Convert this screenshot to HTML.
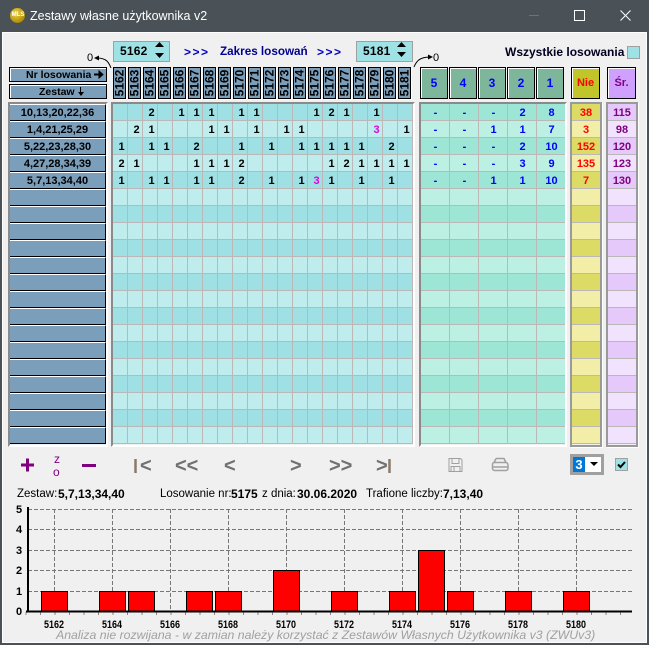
<!DOCTYPE html>
<html><head><meta charset="utf-8"><style>
html,body{margin:0;padding:0}
body{width:649px;height:645px;overflow:hidden;position:relative;background:#4b5257;font-family:"Liberation Sans",sans-serif;color:#000}
div,span,svg{position:absolute}
#c{left:2px;top:32px;width:645px;height:611px;background:#f0f0f0;box-shadow:inset 0 0 0 1px #fff}
.t{white-space:nowrap;line-height:14px}
.s{background:#9fe2e6;border:1px solid #a0a0a0;box-sizing:border-box;top:41px;width:57px;height:21px;font:bold 12px/19px "Liberation Sans",sans-serif;letter-spacing:.2px}
.h{display:flex;left:113px;top:67px;gap:2px}
.h span{position:relative;display:block;width:13px;height:32px;box-sizing:border-box;border:1px solid #000;background:#7b9ebb;box-shadow:1px 1px 0 #fff}
.h span em{position:absolute;left:-10px;top:9px;width:31px;height:12px;font:bold 12px/12px "Liberation Sans",sans-serif;font-style:normal;text-align:center;transform:rotate(-90deg)}
.tile{top:67px;height:32px;box-sizing:border-box;border:1px solid #000;box-shadow:inset 1px 1px 0 #fff;text-align:center;font:bold 12px/30px "Liberation Sans",sans-serif;color:#0000ff;background:#7db69b}
.btn{left:9px;width:98px;box-sizing:border-box;border:1px solid #000;background:#7b9ebb;box-shadow:inset 1px 1px 0 #fff}
.box{box-sizing:border-box;top:102px;height:345px;border-top:2px solid #8a8a8a;border-left:2px solid #8a8a8a;border-right:2px solid #fff;border-bottom:2px solid #fff}
.box2{box-sizing:border-box;top:102px;height:345px;border:2px solid #9a9a9a;box-shadow:1px 1px 0 #fff}
.g{top:104px;height:340px;font:bold 11px/19px "Liberation Sans",sans-serif}
.g p{margin:0;display:flex;height:17px}
.g i{display:block;font-style:normal;text-align:center;flex:none}
#m{left:113px;width:300px;background:repeating-linear-gradient(90deg,transparent 0 14px,#bdb8b8 14px 15px),repeating-linear-gradient(180deg,#9fe0e5 0 16px,#bdb8b8 16px 17px,#bfecec 17px 33px,#bdb8b8 33px 34px)}
#m i{width:15px;position:relative;left:1px}
#a{left:421px;width:144px;color:#0000ff;background:repeating-linear-gradient(90deg,transparent 0 28px,#bdb8b8 28px 29px),repeating-linear-gradient(180deg,#9de5d4 0 16px,#bdb8b8 16px 17px,#bcf0e3 17px 33px,#bdb8b8 33px 34px)}
#a i{width:29px}
#n{left:572px;width:28px;color:#ff0000;text-align:center;line-height:17px;padding-top:0;background:repeating-linear-gradient(180deg,#dbdb66 0 16px,#bdb8b8 16px 17px,#f2eea8 17px 33px,#bdb8b8 33px 34px)}
#r{left:608px;width:28px;color:#800080;text-align:center;line-height:17px;background:repeating-linear-gradient(180deg,#e4c9fa 0 16px,#bdb8b8 16px 17px,#f1e3fe 17px 33px,#bdb8b8 33px 34px)}
#l{left:10px;top:104px;width:96px}
#l p{margin:0;height:15px;border-top:1px solid #fff;border-bottom:1px solid #000;border-right:1px solid #000;box-sizing:content-box;background:#7b9ebb;font:bold 11px/17px "Liberation Sans",sans-serif;text-align:center}
.nav{top:456px;font:bold 20px/20px "Liberation Sans",sans-serif;color:#707070;white-space:nowrap}
</style></head><body>
<div id="c"></div>
<div style="left:10px;top:8px;width:15px;height:15px;border-radius:50%;background:radial-gradient(circle at 40% 35%,#f2d64a,#a98a05 75%)"></div>
<div class="t" style="left:11px;top:9px;width:14px;text-align:center;font:bold 6px/13px 'Liberation Sans',sans-serif;color:#fff">MLS</div>
<div class="t" style="left:30px;top:9px;font-size:12.5px;color:#fff">Zestawy własne użytkownika v2</div>
<svg style="left:0;top:0" width="649" height="32"><path d="M529 15.500h10" stroke="#6d7478"/><rect x="574.500" y="10.500" width="10" height="10" fill="none" stroke="#fff"/><path d="M620.500 10.500l10 10M630.500 10.500l-10 10" stroke="#fff" fill="none"/></svg>

<div class="s" style="left:113px;padding-left:6px">5162</div>
<div class="s" style="left:356px;padding-left:6px">5181</div>
<svg style="left:0;top:0" width="649" height="110">
<path d="M155 47h9l-4.500-5zM155 53h9l-4.500 5zM397 47h9l-4.500-5zM397 52h9l-4.500 5z" fill="#000"/>
<path d="M111 68c-2-5-4-10-14-10" fill="none" stroke="#000"/><path d="M94 58l5-2.500v5z" fill="#000"/>
<path d="M414 67c2-5 5-10 16-10" fill="none" stroke="#000"/><path d="M433 57l-5-2.500v5z" fill="#000"/>
</svg>
<div class="t" style="left:87px;top:51px;font-size:11px">0</div>
<div class="t" style="left:433px;top:51px;font-size:11px">0</div>
<div class="t" style="left:184px;top:45px;font:bold 12px/14px 'Liberation Sans',sans-serif;color:#0000c0;letter-spacing:1.500px">&gt;&gt;&gt;</div>
<div class="t" style="left:220px;top:45px;font:bold 11.7px/14px 'Liberation Sans',sans-serif;color:#000090">Zakres losowań</div>
<div class="t" style="left:317px;top:45px;font:bold 12px/14px 'Liberation Sans',sans-serif;color:#0000c0;letter-spacing:1.500px">&gt;&gt;&gt;</div>
<div class="t" style="left:505px;top:45px;font:bold 12px/14px 'Liberation Sans',sans-serif;color:#000020">Wszystkie losowania</div>
<div style="left:627px;top:46px;width:13px;height:13px;box-sizing:border-box;background:#9fe2e6;border:1px solid #a0a0a0"></div>

<div class="btn" style="top:67px;height:15px"></div>
<div class="btn" style="top:84px;height:15px"></div>
<div class="t" style="left:26px;top:68px;font:bold 10.5px/14px 'Liberation Sans',sans-serif">Nr losowania</div>
<div class="t" style="left:39px;top:85px;font:bold 10.5px/14px 'Liberation Sans',sans-serif">Zestaw</div>
<svg style="left:0;top:60px" width="110" height="40"><path d="M94 14.500h6" stroke="#000" stroke-width="2" fill="none"/><path d="M99 11l4 3.500-4 3.500zM80.500 27v6" fill="#000" stroke="#000"/><path d="M78 32h6l-3 4z" fill="#000"/></svg>

<div class="h"><span><em>5162</em></span><span><em>5163</em></span><span><em>5164</em></span><span><em>5165</em></span><span><em>5166</em></span><span><em>5167</em></span><span><em>5168</em></span><span><em>5169</em></span><span><em>5170</em></span><span><em>5171</em></span><span><em>5172</em></span><span><em>5173</em></span><span><em>5174</em></span><span><em>5175</em></span><span><em>5176</em></span><span><em>5177</em></span><span><em>5178</em></span><span><em>5179</em></span><span><em>5180</em></span><span><em>5181</em></span></div>

<div class="tile" style="left:420px;width:28px">5</div>
<div class="tile" style="left:449px;width:28px">4</div>
<div class="tile" style="left:478px;width:28px">3</div>
<div class="tile" style="left:507px;width:28px">2</div>
<div class="tile" style="left:536px;width:28px">1</div>
<div class="tile" style="left:571px;width:29px;background:#c0c52a;color:#ff0000;font-size:11px">Nie</div>
<div class="tile" style="left:607px;width:29px;background:#d0a0ff;color:#800080;font-size:11px">Śr.</div>

<div class="box" style="left:8px;width:100px"></div>
<div class="box" style="left:111px;width:304px"></div>
<div class="box" style="left:419px;width:148px"></div>
<div class="box2" style="left:570px;width:32px"></div>
<div class="box2" style="left:606px;width:32px"></div>

<div id="l">
<p>10,13,20,22,36</p><p>1,4,21,25,29</p><p>5,22,23,28,30</p><p>4,27,28,34,39</p><p>5,7,13,34,40</p><p></p><p></p><p></p><p></p><p></p><p></p><p></p><p></p><p></p><p></p><p></p><p></p><p></p><p></p><p></p>
</div>

<div class="g" id="m">
<p><i></i><i></i><i>2</i><i></i><i>1</i><i>1</i><i>1</i><i></i><i>1</i><i>1</i><i></i><i></i><i></i><i>1</i><i>2</i><i>1</i><i></i><i>1</i><i></i><i></i></p>
<p><i></i><i>2</i><i>1</i><i></i><i></i><i></i><i>1</i><i>1</i><i></i><i>1</i><i></i><i>1</i><i>1</i><i></i><i></i><i></i><i></i><i style="color:#e000e0">3</i><i></i><i>1</i></p>
<p><i>1</i><i></i><i>1</i><i>1</i><i></i><i>2</i><i></i><i></i><i>1</i><i></i><i>1</i><i></i><i>1</i><i>1</i><i>1</i><i>1</i><i>1</i><i></i><i>2</i><i></i></p>
<p><i>2</i><i>1</i><i></i><i></i><i></i><i>1</i><i>1</i><i>1</i><i>2</i><i></i><i></i><i></i><i></i><i></i><i>1</i><i>2</i><i>1</i><i>1</i><i>1</i><i>1</i></p>
<p><i>1</i><i></i><i>1</i><i>1</i><i></i><i>1</i><i>1</i><i></i><i>2</i><i></i><i>1</i><i></i><i>1</i><i style="color:#e000e0">3</i><i>1</i><i></i><i>1</i><i></i><i>1</i><i></i></p>
</div>

<div class="g" id="a">
<p><i>-</i><i>-</i><i>-</i><i>2</i><i>8</i></p>
<p><i>-</i><i>-</i><i>1</i><i>1</i><i>7</i></p>
<p><i>-</i><i>-</i><i>-</i><i>2</i><i>10</i></p>
<p><i>-</i><i>-</i><i>-</i><i>3</i><i>9</i></p>
<p><i>-</i><i>-</i><i>1</i><i>1</i><i>10</i></p>
</div>
<div class="g" id="n"><span style="position:static;display:block;padding-top:1px">38<br>3<br>152<br>135<br>7</span></div>
<div class="g" id="r"><span style="position:static;display:block;padding-top:1px">115<br>98<br>120<br>123<br>130</span></div>

<svg style="left:0;top:450px" width="649" height="30">
<path d="M21 15h13M27.500 8.500v13" stroke="#800080" stroke-width="3" fill="none"/>
<path d="M82 15.500h14" stroke="#800080" stroke-width="3" fill="none"/>
<path d="M135.500 9v14" stroke="#8a7a6a" stroke-width="2.500" fill="none"/>
<path d="M389.500 9v14" stroke="#8a7a6a" stroke-width="2.500" fill="none"/>
<path d="M449 8.500h11.500l1.500 1.500v11.500h-13zM452 8.500v5h7v-5M451 21.500v-5h9v5M454 17v4" fill="none" stroke="#a0a0a0" stroke-width="1"/>
<path d="M496 8.500h8l2 4M496 8.500l-2 4M492.500 14.500c0-2 1-2 3-2h10c2 0 2.500 1 2.500 3v3c0 1-1 2-2 2h-11.500c-1 0-2-1-2-2zM493 17h15M496 20.500h9" fill="none" stroke="#a0a0a0" stroke-width="1.500"/>
</svg>
<div class="t" style="left:54px;top:452px;font-size:12px;color:#800080">z</div>
<div class="t" style="left:53px;top:465px;font-size:12px;color:#800080">o</div>
<div class="nav" style="left:140px">&lt;</div>
<div class="nav" style="left:175px">&lt;&lt;</div>
<div class="nav" style="left:224px">&lt;</div>
<div class="nav" style="left:290px">&gt;</div>
<div class="nav" style="left:329px">&gt;&gt;</div>
<div class="nav" style="left:376px">&gt;</div>

<div style="left:570px;top:454px;width:34px;height:21px;box-sizing:border-box;border:3px solid #a0a0a0;background:#fff"></div>
<div style="left:573px;top:457px;width:12px;height:15px;background:#0078d7;color:#fff;font:bold 13px/15px 'Liberation Sans',sans-serif;text-align:center">3</div>
<svg style="left:590px;top:462px" width="10" height="6"><path d="M0 0h8l-4 4z" fill="#000"/></svg>
<div style="left:615px;top:458px;width:13px;height:13px;box-sizing:border-box;background:#9fe2e6;border:1px solid #a0a0a0"></div>
<svg style="left:615px;top:458px" width="13" height="13"><path d="M3 6.500l2.500 2.500 4.500-5" fill="none" stroke="#000" stroke-width="2"/></svg>

<div class="t" style="left:17px;top:487px;font-size:11.5px">Zestaw:</div>
<div class="t" style="left:58px;top:487px;font:bold 12px/14px 'Liberation Sans',sans-serif">5,7,13,34,40</div>
<div class="t" style="left:160px;top:487px;font-size:11.5px">Losowanie nr:</div>
<div class="t" style="left:231px;top:487px;font:bold 12px/14px 'Liberation Sans',sans-serif">5175</div>
<div class="t" style="left:262px;top:487px;font-size:11.5px">z dnia:</div>
<div class="t" style="left:297px;top:487px;font:bold 12px/14px 'Liberation Sans',sans-serif">30.06.2020</div>
<div class="t" style="left:366px;top:487px;font-size:11.5px">Trafione liczby:</div>
<div class="t" style="left:443px;top:487px;font:bold 12px/14px 'Liberation Sans',sans-serif">7,13,40</div>

<svg style="left:0;top:500px" width="649" height="145">
<g fill="none" stroke="#777" stroke-dasharray="4 2">
<path d="M28 9.500H632M28 29.500H632M28 50.500H632M28 70.500H632M28 91.500H632"/>
<path d="M54.500 9V111M112.500 9V111M170.500 9V111M228.500 9V111M286.500 9V111M344.500 9V111M402.500 9V111M460.500 9V111M518.500 9V111M576.500 9V111"/>
</g>
<line x1="25" y1="113.500" x2="632" y2="113.500" stroke="#888" stroke-width="3" stroke-dasharray="1 13.500" stroke-dashoffset="-15"/>
<g fill="#ff0000" stroke="#000">
<rect x="41.500" y="91.500" width="26" height="20"/><rect x="99.500" y="91.500" width="26" height="20"/><rect x="128.500" y="91.500" width="26" height="20"/><rect x="186.500" y="91.500" width="26" height="20"/><rect x="215.500" y="91.500" width="26" height="20"/><rect x="273.500" y="70.500" width="26" height="41"/><rect x="331.500" y="91.500" width="26" height="20"/><rect x="389.500" y="91.500" width="26" height="20"/><rect x="418.500" y="50.500" width="26" height="61"/><rect x="447.500" y="91.500" width="26" height="20"/><rect x="505.500" y="91.500" width="26" height="20"/><rect x="563.500" y="91.500" width="26" height="20"/>
</g>
<path d="M28 7V111.500M26 111.500H632" stroke="#000" stroke-width="2" fill="none"/>
<g font-family="Liberation Sans" font-weight="bold" font-size="11" fill="#000">
<text x="16" y="13">5</text><text x="16" y="33">4</text><text x="16" y="54">3</text><text x="16" y="74">2</text><text x="16" y="95">1</text><text x="16" y="115">0</text>
<text x="44" y="128" textLength="20" lengthAdjust="spacingAndGlyphs">5162</text>
<text x="102" y="128" textLength="20" lengthAdjust="spacingAndGlyphs">5164</text>
<text x="160" y="128" textLength="20" lengthAdjust="spacingAndGlyphs">5166</text>
<text x="218" y="128" textLength="20" lengthAdjust="spacingAndGlyphs">5168</text>
<text x="276" y="128" textLength="20" lengthAdjust="spacingAndGlyphs">5170</text>
<text x="334" y="128" textLength="20" lengthAdjust="spacingAndGlyphs">5172</text>
<text x="392" y="128" textLength="20" lengthAdjust="spacingAndGlyphs">5174</text>
<text x="450" y="128" textLength="20" lengthAdjust="spacingAndGlyphs">5176</text>
<text x="508" y="128" textLength="20" lengthAdjust="spacingAndGlyphs">5178</text>
<text x="566" y="128" textLength="20" lengthAdjust="spacingAndGlyphs">5180</text>
</g>
</svg>
<div class="t" style="left:56px;top:628px;font-size:12.3px;font-style:italic;color:#a0a0a0">Analiza nie rozwijana - w zamian należy korzystać z Zestawów Własnych Użytkownika v3 (ZWUv3)</div>
</body></html>
